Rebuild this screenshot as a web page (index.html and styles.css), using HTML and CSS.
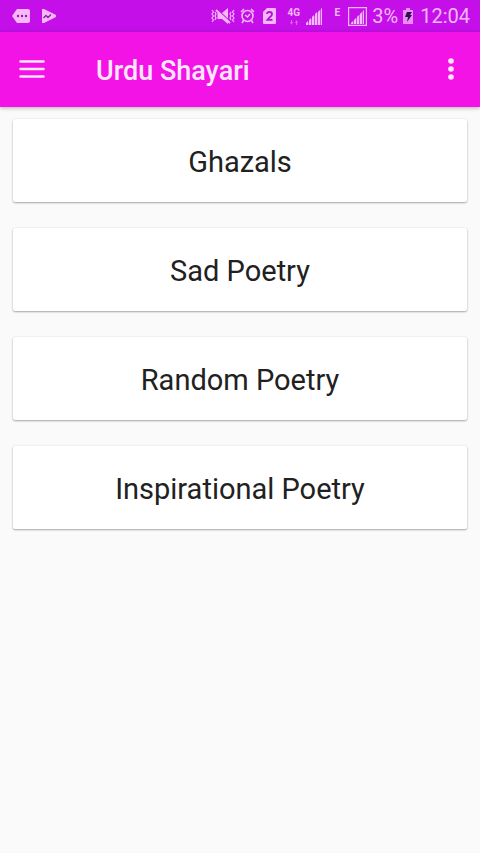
FILE: index.html
```html
<!DOCTYPE html>
<html lang="en">
<head>
<meta charset="utf-8">
<meta name="viewport" content="width=device-width, initial-scale=1">
<title>Urdu Shayari</title>
<link rel="stylesheet" href="styles.css">
</head>
<body>
<div class="status">
  <div class="notices">
    <svg width="18" height="14" viewBox="0 0 18 14"><path fill="currentColor" d="M5 0h11q2 0 2 2v10q0 2-2 2H5L0 7z"/><g fill="#8a20a8"><circle cx="6" cy="7" r="1.2"/><circle cx="10" cy="7" r="1.2"/><circle cx="14" cy="7" r="1.2"/></g></svg>
    <svg width="14" height="14" viewBox="0 0 14 14"><path fill="currentColor" d="M0 0h2l12 6v2L2 14H0z"/><path fill="none" stroke="#8a20a8" stroke-width="1.4" d="M1.5 9l2.5-2.5 2 2L9 5.500"/></svg>
  </div>
  <div class="system">
    <svg width="24" height="16" viewBox="0 0 24 16"><path fill="none" stroke="currentColor" stroke-width="1.2" d="M1 2l1.500 2L1 6l1.500 2L1 10l1.500 2L1 14M4 4l1 2-1 2 1 2-1 2M20 4l-1 2 1 2-1 2 1 2M23 2l-1.500 2L23 6l-1.500 2L23 10l-1.500 2 1.500 2"/><path fill="currentColor" d="M6.500 5H11l6-5v16l-6-5H6.500z"/><path fill="none" stroke="#c40fe9" stroke-width="1.200" d="M7 2.200l12 11"/><path fill="none" stroke="currentColor" stroke-width="1.800" d="M5 2l14 13"/></svg>
    <svg width="18" height="16" viewBox="0 0 18 16"><g fill="none" stroke="currentColor" stroke-width="1.500"><circle cx="7.500" cy="8" r="5.500"/><path d="M1 4l3-3M14 4l-3-3M3.500 12.500L2 15M11.500 12.500L13 15M5 7l2.500 2L10 6"/></g></svg>
    <svg width="18" height="16" viewBox="0 0 18 16"><path fill="currentColor" d="M4 0h8q1 0 1 1v14q0 1-1 1H1q-1 0-1-1V4z"/><path fill="none" stroke="#b012d8" stroke-width="1.800" d="M4 6q0-2 2.500-2T9 6.200q0 1.200-2 2.800L4.500 11.800H9.500"/></svg>
    <span class="network">4G<svg width="8" height="5" viewBox="0 0 8 5"><path fill="currentColor" opacity=".5" d="M0 2h1V0h1v2h1L1.500 5zM5 3l1.500-3L8 3H7v2H6V3z"/></svg></span>
    <svg width="20" height="17" viewBox="0 0 20 17"><path fill="currentColor" opacity=".35" d="M0 17L16 0v17z"/><path fill="currentColor" d="M0 15l2-2v4H0zM3 12l2-2v7H3zM6 9l2-2v10H6zM9 6l2-2v13H9zM12 4l2-2v15h-2zM15 1l1-1v17h-1z"/></svg>
    <span class="network edge">E</span>
    <svg width="19" height="19" viewBox="0 0 19 19"><path fill="none" stroke="currentColor" stroke-width="1.200" d="M.6.6h17.800v17.800H.6z"/><path fill="currentColor" opacity=".35" d="M3 17L16 3v14z"/><path fill="currentColor" d="M3 16l2-2v3H3zM6 13l2-2v6H6zM9 10l2-2v9H9zM12 7l2-2v12h-2zM15 4l1-1v14h-1z"/></svg>
    <span class="battery">3%</span>
    <svg width="12" height="16" viewBox="0 0 12 16"><path fill="currentColor" opacity=".75" d="M3 0h4v2h3v14H0V2h3z"/><path fill="#301050" d="M4 4h5L7 7h2l-5 7 1-5H2z"/></svg>
    <time>12:04</time>
  </div>
</div>
<header class="appbar">
  <button class="menu" aria-label="Menu"><svg width="26" height="18" viewBox="0 0 26 18"><path fill="none" stroke="currentColor" stroke-width="2.500" stroke-linecap="round" d="M1.500 1.500h23M1.500 9h23M1.500 16.500h23"/></svg></button>
  <h1>Urdu Shayari</h1>
  <button class="more" aria-label="More options"><svg width="6" height="22" viewBox="0 0 6 22"><g fill="currentColor"><circle cx="3" cy="3" r="2.800"/><circle cx="3" cy="11" r="2.800"/><circle cx="3" cy="19" r="2.800"/></g></svg></button>
</header>
<main class="list">
  <button class="card">Ghazals</button>
  <button class="card">Sad Poetry</button>
  <button class="card">Random Poetry</button>
  <button class="card">Inspirational Poetry</button>
</main>
</body>
</html>
```
FILE: styles.css
```css
* {
  box-sizing: border-box;
}

body {
  margin: 0;
  min-height: 100vh;
  background: #fafafa;
  color: #212121;
  font-family: Roboto, sans-serif;
}

svg {
  display: block;
  flex: none;
}

button {
  margin: 0;
  border: 0;
  font: inherit;
  color: inherit;
  cursor: pointer;
}

.status {
  display: flex;
  justify-content: space-between;
  align-items: center;
  height: 32px;
  padding: 0 10px 0 12px;
  background: #c40fe9;
  color: #f8b8fb;
}

.notices {
  display: flex;
  gap: 12px;
}

.system {
  display: flex;
  align-items: center;
  gap: 5px;
  font-size: 20px;
  line-height: 32px;
}

.network {
  display: flex;
  flex-direction: column;
  align-items: center;
  gap: 2px;
  width: 15px;
  font-size: 10px;
  font-weight: 700;
  line-height: 10px;
}

.edge {
  width: 12px;
  padding-bottom: 7px;
}

.appbar {
  display: flex;
  align-items: center;
  height: 75px;
  padding: 0 13px 2px 8px;
  background: #f313e6;
  color: #ffe6fd;
  box-shadow: 0 1px 4px rgba(0, 0, 0, 0.3);
}

.menu,
.more {
  display: grid;
  place-items: center;
  height: 48px;
  padding: 0;
  background: none;
}

.menu {
  width: 48px;
}

.more {
  width: 32px;
}

.appbar h1 {
  flex: 1;
  margin: 0;
  padding: 4px 0 0 40px;
  font-size: 27px;
  font-weight: 500;
  line-height: 32px;
}

.list {
  display: grid;
  gap: 26px;
  padding: 12px 13px;
}

.card {
  height: 83px;
  padding: 3px 16px 0;
  border-radius: 2px;
  background: #fff;
  font-size: 29px;
  line-height: 36px;
  text-align: center;
  box-shadow: 0 1px 2px rgba(0, 0, 0, 0.32), 0 0 2px rgba(0, 0, 0, 0.1);
}
```
